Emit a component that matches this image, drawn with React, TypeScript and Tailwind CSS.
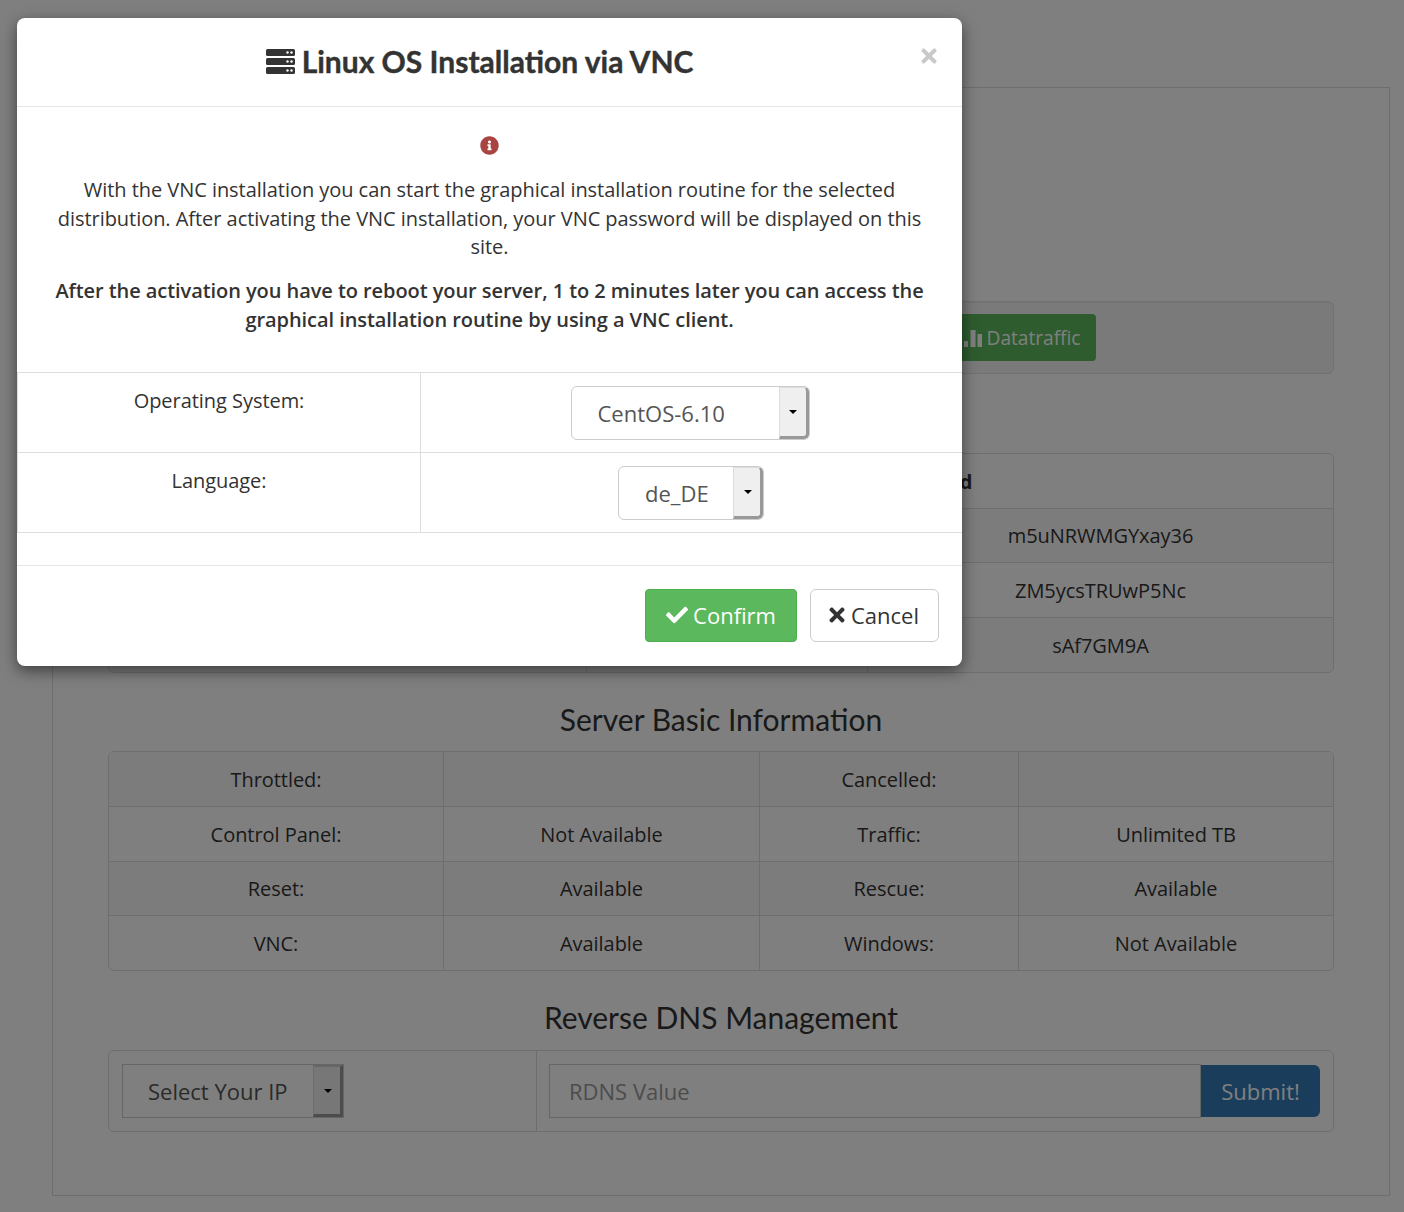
import React from "react";
import { FaCheck, FaTimes, FaInfoCircle } from "react-icons/fa";

function ServerIcon() {
  return (
    <svg width="29" height="25" viewBox="0 0 29 25" className="shrink-0">
      {[0, 9, 18].map((y) => (
        <g key={y}>
          <rect x="0" y={y} width="29" height="7" rx="1.5" fill="#333" />
          <circle cx="21.5" cy={y + 3.5} r="1.2" fill="#fff" />
          <circle cx="25.5" cy={y + 3.5} r="1.2" fill="#fff" />
        </g>
      ))}
    </svg>
  );
}

function BarsIcon() {
  return (
    <svg width="18" height="17" viewBox="0 0 18 17" fill="currentColor" className="shrink-0">
      <rect x="0" y="11" width="4" height="6" rx="0.5" />
      <rect x="6.5" y="0" width="5" height="17" rx="0.5" />
      <rect x="13.5" y="4" width="4.5" height="13" rx="0.5" />
    </svg>
  );
}

function Arrow() {
  return <span className="w-0 h-0 border-x-[4px] border-t-[4px] border-x-transparent border-t-black" />;
}

function SelectBox({ label, textWidth, rounded }: { label: string; textWidth: string; rounded: boolean }) {
  return (
    <div
      className={`flex h-[54px] items-stretch border border-[#ccc] bg-white text-[22px] tracking-normal text-[#555] ${textWidth} ${
        rounded ? "rounded-[6px]" : ""
      }`}
    >
      <span className="flex-1 pl-[26px] pt-[2px] flex items-center whitespace-nowrap">{label}</span>
      <span className="w-[30px] flex items-center justify-center pl-[1px] bg-[#efefef] border-l-[1px] border-l-[#ddd] border-r-[3px] border-b-[3px] border-r-[#999] border-b-[#999] border-t border-t-[#ddd] rounded-r-[5px]">
        <Arrow />
      </span>
    </div>
  );
}

function PlainSelect() {
  return (
    <div className="flex h-[54px] w-[222px] items-stretch border border-[#ccc] bg-white text-[22px] tracking-normal text-[#555]">
      <span className="flex-1 pl-[25px] flex items-center whitespace-nowrap">Select Your IP</span>
      <span className="w-[30px] flex items-center justify-center pl-[1px] bg-[#efefef] border-l border-l-[#ddd] border-t-[2px] border-t-[#ccc] border-r-[3px] border-b-[3px] border-r-[#999] border-b-[#999]">
        <Arrow />
      </span>
    </div>
  );
}

const Heading = ({ children, cls }: { children: React.ReactNode; cls: string }) => (
  <h3 className={`flex items-center justify-center font-['Lato',sans-serif] text-[30px] font-normal tracking-normal text-[#333] ${cls}`}>
    {children}
  </h3>
);

const infoRows = [
  { h: "h-[54px]", s: true, c: ["Throttled:", "", "Cancelled:", ""] },
  { h: "h-[55px]", s: false, c: ["Control Panel:", "Not Available", "Traffic:", "Unlimited TB"] },
  { h: "h-[54px]", s: true, c: ["Reset:", "Available", "Rescue:", "Available"] },
  { h: "h-[55px]", s: false, c: ["VNC:", "Available", "Windows:", "Not Available"] },
];

const pwRows = [
  { h: "h-[54px]", s: false, t: "" },
  { h: "h-[54px]", s: true, t: "m5uNRWMGYxay36" },
  { h: "h-[55px]", s: false, t: "ZM5ycsTRUwP5Nc" },
  { h: "h-[55px]", s: true, t: "sAf7GM9A" },
];

export default function App() {
  return (
    <div className="relative h-[1212px] overflow-hidden bg-white font-['Open_Sans',sans-serif] text-[20px] leading-[28.57px] tracking-[-0.045px] text-[#333]">
      <div className="pl-[52px] pr-[14px] pt-[87px]">
        <div className="h-[1109px] border border-[#ddd] px-[55px]">
          <div className="mt-[213px] flex h-[73px] items-center rounded-[6px] border border-[#e3e3e3] bg-[#f5f5f5] pl-[835px] shadow-[inset_0_1px_1px_rgba(0,0,0,0.05)]">
            <button className="flex h-[47px] w-[152px] items-center justify-center gap-[5px] rounded-[4px] bg-[#5cb85c] pl-[4px] pt-[1px] text-[19.2px] text-white">
              <BarsIcon />
              Datatraffic
            </button>
          </div>

          <div className="mt-[79px] overflow-hidden rounded-[6px] border border-[#ddd]">
            {pwRows.map((r, i) => (
              <div key={i} className={`grid grid-cols-[477px_281px_1fr] ${r.h} ${i ? "border-t border-[#ddd]" : ""} ${r.s ? "bg-[#f9f9f9]" : ""}`}>
                <div />
                <div className="border-l border-[#ddd]" />
                <div className={`flex items-center border-l border-[#ddd] pt-[2px] ${i ? "justify-center" : "pl-[9px] font-bold"}`}>
                  {i ? r.t : "Password"}
                </div>
              </div>
            ))}
          </div>

          <Heading cls="h-[78px] pt-[14px]">Server Basic Information</Heading>

          <div className="overflow-hidden rounded-[6px] border border-[#ddd]">
            {infoRows.map((r, i) => (
              <div key={i} className={`grid grid-cols-[334px_316px_259px_1fr] ${r.h} ${i ? "border-t border-[#ddd]" : ""} ${r.s ? "bg-[#f9f9f9]" : ""}`}>
                {r.c.map((t, j) => (
                  <div key={j} className={`flex items-center justify-center ${i === 2 ? "pt-[1px]" : "pt-[3px]"} ${j ? "border-l border-[#ddd]" : ""}`}>
                    {t}
                  </div>
                ))}
              </div>
            ))}
          </div>

          <Heading cls="h-[79px] pt-[13px]">Reverse DNS Management</Heading>

          <div className="grid h-[82px] grid-cols-[427px_1fr] rounded-[6px] border border-[#ddd]">
            <div className="flex items-center pl-[13px]">
              <PlainSelect />
            </div>
            <div className="flex items-center border-l border-[#ddd] px-[12px] pr-[13px]">
              <div className="flex h-[54px] flex-1 items-center border border-[#ccc] pl-[19px] text-[22px] tracking-normal text-[#999]">
                RDNS Value
              </div>
              <button className="flex h-[52px] w-[119px] items-center justify-center rounded-r-[6px] bg-[#337ab7] text-[22px] tracking-normal text-white">
                Submit!
              </button>
            </div>
          </div>
        </div>
      </div>

      <div className="absolute inset-0 bg-black/50" />

      <div className="absolute left-[17px] top-[18px] flex h-[648px] w-[945px] flex-col rounded-[8px] bg-white shadow-[0_5px_15px_rgba(0,0,0,0.5)]">
        <div className="relative flex h-[89px] shrink-0 items-center justify-center gap-[7px] border-b border-[#e5e5e5] pr-[20px] pb-[2px]">
          <ServerIcon />
          <span className="font-['Lato',sans-serif] text-[30px] font-bold tracking-normal text-[#333] [-webkit-text-stroke:0.4px_#333]">Linux OS Installation via VNC</span>
          <FaTimes className="absolute left-[901px] top-[27px] text-[22px] text-[#c9c9c9]" />
        </div>

        <div className="px-[20px] pt-[29px] text-center">
          <div className="flex justify-center">
            <FaInfoCircle className="text-[19px] text-[#a94442]" />
          </div>
          <p className="mt-[21px]">
            With the VNC installation you can start the graphical installation routine for the selected distribution. After activating the VNC installation, your VNC password will be displayed on this site.
          </p>
          <p className="mt-[14px] font-semibold leading-[29px] tracking-[-0.065px]">
            After the activation you have to reboot your server, 1 to 2 minutes later you can access the graphical installation routine by using a VNC client.
          </p>
        </div>

        <div className="mt-[38px] border-t border-[#ddd]">
          <div className="grid h-[80px] grid-cols-[402px_1fr] border-b border-l border-[#ddd]">
            <div className="pt-[14px] text-center">Operating System:</div>
            <div className="flex items-start justify-center border-l border-[#ddd] pt-[13px] pr-[3px]">
              <SelectBox label="CentOS-6.10" textWidth="w-[239px]" rounded />
            </div>
          </div>
          <div className="grid h-[80px] grid-cols-[402px_1fr] border-b border-l border-[#ddd]">
            <div className="pt-[14px] text-center">Language:</div>
            <div className="flex items-start justify-center border-l border-[#ddd] pt-[13px] pr-[1px]">
              <SelectBox label="de_DE" textWidth="w-[146px]" rounded />
            </div>
          </div>
        </div>

        <div className="mt-[32px] flex flex-1 items-start justify-end gap-[13px] border-t border-[#e5e5e5] pr-[23px] pt-[23px] text-[22px] tracking-normal">
          <button className="flex h-[53px] w-[152px] items-center justify-center gap-[5px] rounded-[4px] border border-[#4cae4c] bg-[#5cb85c] text-white">
            <FaCheck className="text-[22px]" />
            Confirm
          </button>
          <button className="flex h-[53px] w-[129px] items-center justify-center gap-[3px] rounded-[6px] border border-[#ccc] bg-white pr-[4px] text-[#333]">
            <FaTimes className="text-[22px]" />
            Cancel
          </button>
        </div>
      </div>
    </div>
  );
}
